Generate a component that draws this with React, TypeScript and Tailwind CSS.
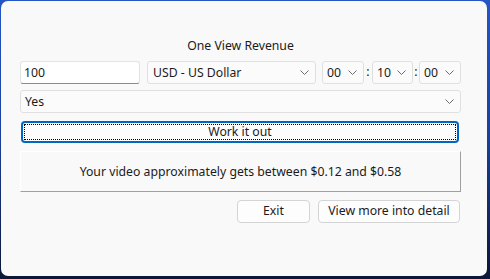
import { ReactNode } from "react";

function Chevron({ className = "" }: { className?: string }) {
  return (
    <svg width="9" height="5" viewBox="0 0 9 5" className={className}>
      <polyline points="0.5,0.5 4.5,4.5 8.5,0.5" fill="none" stroke="#6b6b6b" strokeWidth="1" />
    </svg>
  );
}

function Select({ value, className = "" }: { value: string; className?: string }) {
  return (
    <div
      className={`h-[23px] flex items-center justify-between pl-[4px] pr-[6px] bg-[#fbfbfb] border border-[#e0e0e0] rounded-[3px] ${className}`}
    >
      <span className="pt-[2px]">{value}</span>
      <Chevron />
    </div>
  );
}

function Btn({ children, className = "" }: { children: ReactNode; className?: string }) {
  return (
    <div
      className={`h-[23px] flex items-center justify-center bg-[#fdfdfd] border border-[#d4d4d4] rounded-[4px] ${className}`}
    >
      {children}
    </div>
  );
}

export default function App() {
  return (
    <div className="w-[490px] h-[279px] bg-gradient-to-b from-[#2456c4] via-[#1b3f9a] to-[#0b1638] pl-[1px] pt-[1px] overflow-hidden">
      <div
        className="w-[486px] h-[275px] bg-[#f9f9f9] rounded-[7px] pl-[19px] text-[12.25px] text-[#1b1b1b]"
        style={{ fontFamily: '"Noto Sans", "Segoe UI", sans-serif' }}
      >
        <div className="w-[441px] pt-[36px] flex flex-col">
          <div className="h-[17px] leading-[17px] text-center">One View Revenue</div>

          <div className="mt-[7px] flex items-center">
            <div className="w-[120px] h-[23px] flex items-center pl-[3px] pt-[2px] bg-white border border-[#e3e3e3] border-b-[#8a8a8a] rounded-[3px]">
              100
            </div>
            <Select value="USD - US Dollar" className="ml-[7px] w-[169px] pl-[5px]" />
            <Select value="00" className="ml-[6px] w-[42px]" />
            <div className="w-[8px] text-center">:</div>
            <Select value="10" className="w-[41px]" />
            <div className="w-[6px] text-center">:</div>
            <Select value="00" className="w-[42px]" />
          </div>

          <Select value="Yes" className="mt-[6px] w-[441px]" />

          <div className="mt-[8px] ml-[1px] w-[438px] h-[22px] rounded-[4px] border-2 border-[#0067c0] bg-[#fdfdfd] p-[1px]">
            <div className="h-full border border-dotted border-black flex items-center justify-center leading-none">
              Work it out
            </div>
          </div>

          <div className="mt-[8px] w-[441px] h-[41px] pt-[2px] flex items-center justify-center bg-[#f9f9f9] border border-white border-r-[#a0a0a0] border-b-[#a0a0a0]">
            Your video approximately gets between $0.12 and $0.58
          </div>

          <div className="mt-[8px] flex justify-end">
            <Btn className="w-[73px]">Exit</Btn>
            <Btn className="ml-[8px] w-[142px] mr-[1px]">View more into detail</Btn>
          </div>
        </div>
      </div>
    </div>
  );
}
